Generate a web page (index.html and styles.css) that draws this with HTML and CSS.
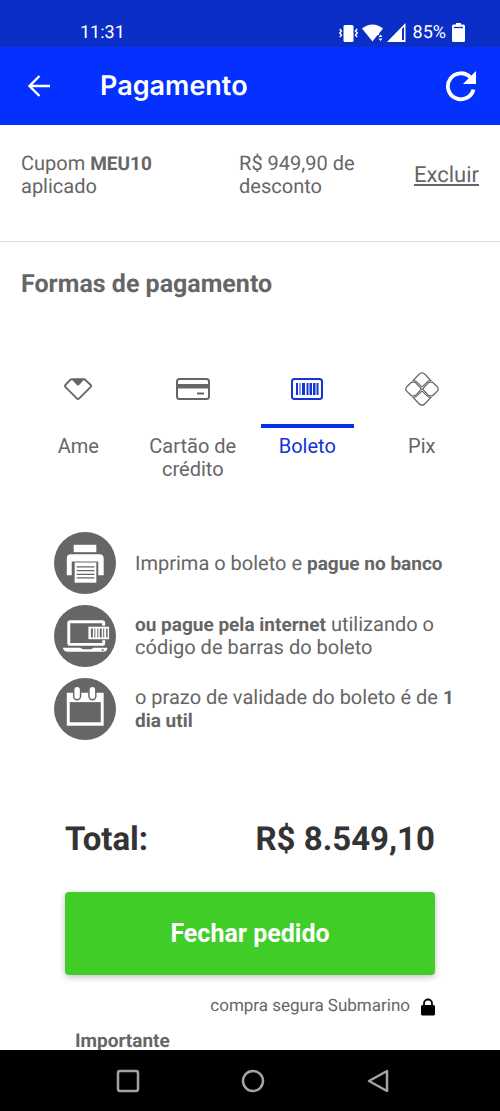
FILE: index.html
```html
<!DOCTYPE html>
<html lang="pt-BR">
<head>
<meta charset="utf-8">
<meta name="viewport" content="width=device-width, initial-scale=1">
<title>Pagamento</title>
<link rel="stylesheet" href="styles.css">
</head>
<body class="screen">
<div class="status-bar">
  <span>11:31</span>
  <div class="status-icons">
    <svg width="19" height="18" viewBox="0 0 19 18" fill="#fff"><rect x="4.500" y="1" width="10" height="17" rx="1.500"/><path d="M.8 5l1.700 2L.8 9l1.700 2-1.700 2M18.200 5l-1.700 2 1.700 2-1.700 2 1.700 2" fill="none" stroke="#fff" stroke-width="1.400"/></svg>
    <svg width="21" height="18" viewBox="0 0 21 18" fill="#fff"><path d="M0 4.500Q10.500-3.500 21 4.500L17 9.500v1.500h-1.500L10.500 17.500z"/><path d="M16.500 13l2-2.500 2 2.500zM16.500 14.500h4l-2 2.500z"/></svg>
    <svg width="19" height="19" viewBox="0 0 19 19"><path d="M0 19L18.500 0v19z" fill="#fff"/><path d="M15 6v11h2V4z" fill="#0a2ec6"/></svg>
    <span class="battery-level">85%</span>
    <svg width="13" height="19" viewBox="0 0 13 19"><path d="M4 0h5v1.500h2.500A1.500 1.500 0 0 1 13 3v14.500a1.500 1.500 0 0 1-1.500 1.500h-10A1.500 1.500 0 0 1 0 17.500V3a1.500 1.500 0 0 1 1.500-1.500H4z" fill="#fff"/><path d="M2 4.500h9" stroke="#0a2ec6" stroke-width="1.300"/></svg>
  </div>
</div>
<header class="app-bar">
  <button class="icon-button" type="button" aria-label="Voltar"><svg width="24" height="24" viewBox="0 0 24 24" fill="none" stroke="#fff" stroke-width="2.400"><path d="M23 12H2.500M12.500 2L2.500 12l10 10"/></svg></button>
  <h1 class="app-title">Pagamento</h1>
  <button class="icon-button" type="button" aria-label="Atualizar"><svg width="32" height="32" viewBox="0 0 32 32"><path d="M28.500 19.500A13 13 0 1 1 25.500 7.500" fill="none" stroke="#fff" stroke-width="3.800"/><path d="M31 1v13H18z" fill="#fff"/></svg></button>
</header>
<main class="content">
  <section class="coupon">
    <p class="coupon-name">Cupom <strong>MEU10</strong> aplicado</p>
    <p class="coupon-value">R$ 949,90 de desconto</p>
    <a class="coupon-remove" href="#">Excluir</a>
  </section>
  <section class="methods">
    <h2 class="methods-title">Formas de pagamento</h2>
    <nav class="tabs">
      <button class="tab" type="button">
        <span class="tab-icon"><svg width="28" height="22" viewBox="0 0 28 22"><path d="M8 1.200h12.500L26.700 7Q27.500 8 26.500 9.200L15.200 20.400Q14 21.500 12.800 20.400L1.500 9.200Q.6 8 1.400 7L6.500 1.700Q7 1.200 8 1.200z" fill="none" stroke="#666" stroke-width="1.900"/><path d="M7.500 1h13l-5.300 5.900q-1.200 1.200-2.400 0z" fill="#666"/></svg></span>
        <span>Ame</span>
      </button>
      <button class="tab" type="button">
        <span class="tab-icon"><svg width="34" height="22" viewBox="0 0 34 22"><rect x="1" y="1" width="32" height="20" rx="2.500" fill="none" stroke="#666" stroke-width="2"/><path d="M1 6h32v4.500H1zM21 14.500h7v2h-7z" fill="#666"/></svg></span>
        <span>Cartão de crédito</span>
      </button>
      <button class="tab tab-active" type="button">
        <span class="tab-icon"><svg width="32" height="22" viewBox="0 0 32 22"><rect x="1" y="1" width="30" height="20" rx="2.500" fill="none" stroke="#1434d4" stroke-width="2"/><path d="M5 5h2v12H5zM8.500 5h1v12h-1zM11 5h3v12h-3zM15.500 5h2v12h-2zM18.500 5h2.500v12h-2.500zM22 5h2.500v12H22zM25.500 5h2v12h-2z" fill="#1434d4"/></svg></span>
        <span>Boleto</span>
      </button>
      <button class="tab" type="button">
        <span class="tab-icon"><svg width="34" height="34" viewBox="0 0 34 34" fill="none" stroke="#666" stroke-width="1.200"><path d="M8.200 8.500L13.800 2.500Q17-.8 20.200 2.500L25.800 8.500Q23.500 8.700 22 10.200L18 14.200Q17 15.200 16 14.200L12 10.200Q10.500 8.700 8.200 8.500z"/><path d="M8.200 25.500L13.800 31.500Q17 34.800 20.200 31.500L25.800 25.500Q23.500 25.300 22 23.800L18 19.800Q17 18.800 16 19.800L12 23.800Q10.500 25.300 8.200 25.500z"/><path d="M6.500 10.200h2q1.500 0 2.500 1L16.500 17 11 22.800q-1 1-2.500 1h-2L2 19.500Q-.5 17 2 14.500zM27.500 10.200h-2q-1.500 0-2.500 1L17.500 17l5.500 5.800q1 1 2.500 1h2l4.500-4.300q2.500-2.500 0-5z"/></svg></span>
        <span>Pix</span>
      </button>
    </nav>
    <ul class="steps">
      <li class="step">
        <svg class="step-icon" viewBox="0 0 63 63"><circle cx="31.500" cy="31.500" r="31.500" fill="#666"/><g fill="#fff"><path d="M20 13h23v7.500H20z"/><path d="M17 22.500h29q4.500 0 4.500 4.500v17H45V30H18v14h-5V27q0-4.500 4-4.500z"/><path d="M21 31h22v20.500H21z"/></g><path d="M23 35.500h18M23 39.200h18M23 43h18M23 46.700h18" stroke="#666" stroke-width="1.300"/></svg>
        <p>Imprima o boleto e <strong>pague no banco</strong></p>
      </li>
      <li class="step">
        <svg class="step-icon" viewBox="0 0 63 63"><circle cx="31.500" cy="31.500" r="31.500" fill="#666"/><path d="M50.500 22v-3.500Q50.500 17 49 17H16.500Q15 17 15 18.500v20q0 1.500 1.500 1.500H49q1.500 0 1.500-1.500V34" fill="none" stroke="#fff" stroke-width="3"/><path d="M9 43.500h18q1 1.500 3 1.500h7q2 0 3-1.500h14v2q-1 2-4 2H14q-4 0-5-4z" fill="#fff"/><path d="M34.500 21.500h22v13.800h-22z" fill="#fff" stroke="#666"/><path d="M37.500 24h2v9h-2zM41 24h1v9h-1zM44 24h1v9h-1zM46.500 24h2v9h-2zM50 24h1v9h-1zM53 24h1.500v9H53zM48.500 45h2v1.500h-2z" fill="#666"/></svg>
        <p><strong>ou pague pela internet</strong> utilizando o código de barras do boleto</p>
      </li>
      <li class="step">
        <svg class="step-icon" viewBox="0 0 63 63"><circle cx="31.500" cy="31.500" r="31.500" fill="#666"/><path d="M13 15h37.500v33.500H13z" fill="#fff"/><path d="M16 24.500h31.500v20.500H16z" fill="#666"/><g fill="#fff" stroke="#666" stroke-width="1.500"><rect x="20" y="8.500" width="7" height="13.500" rx="3.500"/><rect x="35.500" y="8.500" width="7" height="13.500" rx="3.500"/></g></svg>
        <p>o prazo de validade do boleto é de <strong>1 dia util</strong></p>
      </li>
    </ul>
  </section>
  <section class="checkout">
    <div class="total"><span>Total:</span><span>R$ 8.549,10</span></div>
    <button class="submit" type="button">Fechar pedido</button>
    <p class="secure">compra segura Submarino
      <svg width="14" height="18" viewBox="0 0 14 18"><path d="M3 8V5.500a4 4 0 0 1 8 0V8" fill="none" stroke="#000" stroke-width="1.800"/><rect y="7" width="14" height="10.500" rx="1.500"/></svg>
    </p>
    <h3 class="notice">Importante</h3>
  </section>
</main>
<nav class="system-nav">
  <button class="icon-button" type="button" aria-label="Recentes"><svg width="24" height="24" viewBox="0 0 24 24" fill="none" stroke="#a3a3a3" stroke-width="2.500"><rect x="2" y="2" width="20" height="20" rx="2"/></svg></button>
  <button class="icon-button" type="button" aria-label="Início"><svg width="24" height="24" viewBox="0 0 24 24" fill="none" stroke="#a3a3a3" stroke-width="2.500"><circle cx="12" cy="12" r="10"/></svg></button>
  <button class="icon-button" type="button" aria-label="Voltar"><svg width="24" height="24" viewBox="0 0 24 24" fill="none" stroke="#a3a3a3" stroke-width="2.500" stroke-linejoin="round"><path d="M21 2v20L3 12z"/></svg></button>
</nav>
</body>
</html>
```
FILE: styles.css
```css
* {
  box-sizing: border-box;
}

.screen {
  display: flex;
  flex-direction: column;
  height: 100vh;
  margin: 0;
  background: #fff;
  color: #666;
  font-family: Roboto, sans-serif;
  font-size: 20px;
  line-height: 23px;
  text-rendering: geometricPrecision;
}

h1, h2, h3, p, ul {
  margin: 0;
  padding: 0;
}

button {
  padding: 0;
  border: 0;
  background: none;
  color: inherit;
  font: inherit;
}

strong {
  font-size: 19px;
  font-weight: 700;
}

svg {
  display: block;
  flex: none;
}

.status-bar {
  display: flex;
  justify-content: space-between;
  align-items: center;
  padding: 21px 35px 3px 80px;
  background: #0a2ec6;
  color: #fff;
  font-size: 18px;
}

.status-icons {
  display: flex;
  align-items: center;
  gap: 4px;
}

.battery-level {
  margin: 0 2px 0 3px;
}

.app-bar {
  display: flex;
  align-items: center;
  padding: 0 23px 0 27px;
  height: 78px;
  flex: none;
  background: #0431ff;
  color: #fff;
}

.app-title {
  flex: 1;
  margin-left: 49px;
  font-family: Inter, sans-serif;
  font-size: 27px;
  font-weight: 600;
  line-height: 32px;
}

.content {
  flex: 1;
  min-height: 0;
  overflow-y: auto;
  scrollbar-width: none;
}

.coupon {
  display: grid;
  grid-template-columns: 10fr 8fr 3fr;
  padding: 27px 21px 43px;
  border-bottom: 1px solid #dcdcdc;
}

.coupon-name {
  max-width: 160px;
}

.coupon-value {
  max-width: 140px;
}

.coupon-remove {
  align-self: center;
  justify-self: end;
  color: inherit;
  font-size: 22px;
}

.methods {
  padding: 28px 21px 0;
}

.methods-title {
  font-size: 25px;
  line-height: 30px;
}

.tabs {
  display: grid;
  grid-template-columns: repeat(4, 1fr);
  align-items: start;
  margin-top: 53px;
}

.tab {
  display: flex;
  flex-direction: column;
  gap: 7px;
  padding: 0 11px;
}

.tab > span {
  width: 100%;
}

.tab-icon {
  display: flex;
  justify-content: center;
  align-items: center;
  height: 75px;
  border-bottom: 4px solid transparent;
}

.tab-active {
  color: #1434d4;
}

.tab-active .tab-icon {
  border-color: #0431e8;
}

.steps {
  display: grid;
  gap: 11px;
  margin-top: 51px;
  padding: 0 12px 0 33px;
  list-style: none;
}

.step {
  display: flex;
  align-items: center;
  gap: 19px;
}

.step-icon {
  width: 62px;
  height: 62px;
}

.checkout {
  padding: 80px 65px 0;
}

.total {
  display: flex;
  justify-content: space-between;
  color: #333;
  font-size: 33px;
  font-weight: 700;
  line-height: 40px;
}

.submit {
  display: block;
  width: 100%;
  margin-top: 32px;
  padding: 26px 0;
  border-radius: 4px;
  background: #40cd28;
  box-shadow: 0 2px 6px rgba(0, 0, 0, 0.25);
  color: #fff;
  font-size: 25px;
  font-weight: 700;
  line-height: 31px;
}

.secure {
  display: flex;
  justify-content: flex-end;
  align-items: center;
  gap: 11px;
  margin-top: 20px;
  font-size: 17px;
}

.notice {
  margin: 11px 10px 20px;
  font-size: 19px;
}

.system-nav {
  display: flex;
  justify-content: center;
  align-items: center;
  gap: 101px;
  height: 61px;
  flex: none;
  padding-left: 5px;
  background: #000;
}
```
